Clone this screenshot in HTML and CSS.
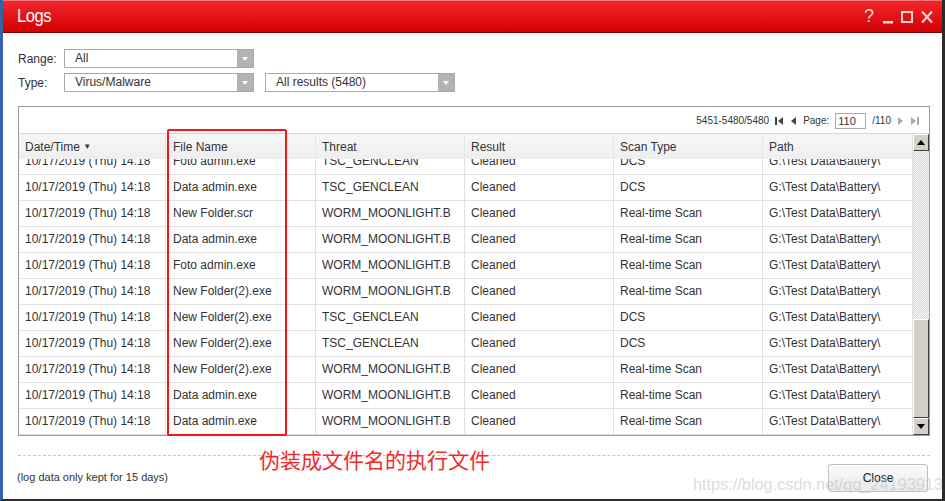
FILE: index.html
```html
<!DOCTYPE html>
<html lang="en">
<head>
    <meta charset="UTF-8">
    <title>Logs</title>
    <link rel="stylesheet" href="styles.css">
</head>
<body>
    <div class="window">
        <div class="titlebar">
            <span class="title">Logs</span>
            <div class="win-ctrls">
                <span class="wc-help">?</span>
                <svg class="wc" width="10" height="16" viewBox="0 0 10 16"><rect x="0" y="12" width="10" height="2.5" fill="#fbd6d6"/></svg>
                <svg class="wc" width="12" height="16" viewBox="0 0 12 16"><rect x="1" y="3" width="10" height="10" fill="none" stroke="#fbd6d6" stroke-width="2"/></svg>
                <svg class="wc" width="12" height="16" viewBox="0 0 12 16"><path d="M1 2.5 L11 13.5 M11 2.5 L1 13.5" stroke="#fbd6d6" stroke-width="2"/></svg>
            </div>
        </div>

        <div class="content">
            <div class="filters">
                <div class="filter-row">
                    <span class="label">Range:</span>
                    <div class="select">All<span class="arrow"></span></div>
                </div>
                <div class="filter-row">
                    <span class="label">Type:</span>
                    <div class="select">Virus/Malware<span class="arrow"></span></div>
                    <div class="select results">All results (5480)<span class="arrow"></span></div>
                </div>
            </div>

            <div class="grid">
                <div class="pager">
                    <span>5451-5480/5480</span>
                    <svg width="9" height="10" viewBox="0 0 9 10"><rect x="0" y="1" width="2" height="8" fill="#444"/><path d="M8 1 L3 5 L8 9 Z" fill="#444"/></svg>
                    <svg width="7" height="10" viewBox="0 0 7 10"><path d="M6 1 L1 5 L6 9 Z" fill="#444"/></svg>
                    <span>Page:</span>
                    <span class="page-box">110</span>
                    <span>/110</span>
                    <svg width="7" height="10" viewBox="0 0 7 10"><path d="M1 1 L6 5 L1 9 Z" fill="#aaa"/></svg>
                    <svg width="9" height="10" viewBox="0 0 9 10"><path d="M1 1 L6 5 L1 9 Z" fill="#aaa"/><rect x="7" y="1" width="2" height="8" fill="#aaa"/></svg>
                </div>
                <div class="grid-main">
                    <div class="grid-table">
                        <div class="row head">
                            <div class="cell">Date/Time <span class="sort">&#9660;</span></div>
                            <div class="cell">File Name</div>
                            <div class="cell">Threat</div>
                            <div class="cell">Result</div>
                            <div class="cell">Scan Type</div>
                            <div class="cell">Path</div>
                        </div>
                        <div class="grid-body">
                            <div class="rows">
                                <div class="row"><div class="cell">10/17/2019 (Thu) 14:18</div><div class="cell">Foto admin.exe</div><div class="cell">TSC_GENCLEAN</div><div class="cell">Cleaned</div><div class="cell">DCS</div><div class="cell">G:\Test Data\Battery\</div></div>
                                <div class="row"><div class="cell">10/17/2019 (Thu) 14:18</div><div class="cell">Data admin.exe</div><div class="cell">TSC_GENCLEAN</div><div class="cell">Cleaned</div><div class="cell">DCS</div><div class="cell">G:\Test Data\Battery\</div></div>
                                <div class="row"><div class="cell">10/17/2019 (Thu) 14:18</div><div class="cell">New Folder.scr</div><div class="cell">WORM_MOONLIGHT.B</div><div class="cell">Cleaned</div><div class="cell">Real-time Scan</div><div class="cell">G:\Test Data\Battery\</div></div>
                                <div class="row"><div class="cell">10/17/2019 (Thu) 14:18</div><div class="cell">Data admin.exe</div><div class="cell">WORM_MOONLIGHT.B</div><div class="cell">Cleaned</div><div class="cell">Real-time Scan</div><div class="cell">G:\Test Data\Battery\</div></div>
                                <div class="row"><div class="cell">10/17/2019 (Thu) 14:18</div><div class="cell">Foto admin.exe</div><div class="cell">WORM_MOONLIGHT.B</div><div class="cell">Cleaned</div><div class="cell">Real-time Scan</div><div class="cell">G:\Test Data\Battery\</div></div>
                                <div class="row"><div class="cell">10/17/2019 (Thu) 14:18</div><div class="cell">New Folder(2).exe</div><div class="cell">WORM_MOONLIGHT.B</div><div class="cell">Cleaned</div><div class="cell">Real-time Scan</div><div class="cell">G:\Test Data\Battery\</div></div>
                                <div class="row"><div class="cell">10/17/2019 (Thu) 14:18</div><div class="cell">New Folder(2).exe</div><div class="cell">TSC_GENCLEAN</div><div class="cell">Cleaned</div><div class="cell">DCS</div><div class="cell">G:\Test Data\Battery\</div></div>
                                <div class="row"><div class="cell">10/17/2019 (Thu) 14:18</div><div class="cell">New Folder(2).exe</div><div class="cell">TSC_GENCLEAN</div><div class="cell">Cleaned</div><div class="cell">DCS</div><div class="cell">G:\Test Data\Battery\</div></div>
                                <div class="row"><div class="cell">10/17/2019 (Thu) 14:18</div><div class="cell">New Folder(2).exe</div><div class="cell">WORM_MOONLIGHT.B</div><div class="cell">Cleaned</div><div class="cell">Real-time Scan</div><div class="cell">G:\Test Data\Battery\</div></div>
                                <div class="row"><div class="cell">10/17/2019 (Thu) 14:18</div><div class="cell">Data admin.exe</div><div class="cell">WORM_MOONLIGHT.B</div><div class="cell">Cleaned</div><div class="cell">Real-time Scan</div><div class="cell">G:\Test Data\Battery\</div></div>
                                <div class="row"><div class="cell">10/17/2019 (Thu) 14:18</div><div class="cell">Data admin.exe</div><div class="cell">WORM_MOONLIGHT.B</div><div class="cell">Cleaned</div><div class="cell">Real-time Scan</div><div class="cell">G:\Test Data\Battery\</div></div>
                            </div>
                        </div>
                    </div>
                    <div class="scrollbar">
                        <div class="sb-btn"><svg width="8" height="5" viewBox="0 0 8 5"><path d="M0 5 L4 0 L8 5 Z" fill="#000"/></svg></div>
                        <div class="sb-track"></div>
                        <div class="sb-thumb"></div>
                        <div class="sb-btn"><svg width="8" height="5" viewBox="0 0 8 5"><path d="M0 0 L8 0 L4 5 Z" fill="#000"/></svg></div>
                    </div>
                </div>
            </div>

            <div class="footer">
                <span class="note">(log data only kept for 15 days)</span>
                <div class="btn">Close</div>
            </div>
        </div>

        <div class="annot-box"></div>
        <div class="annot-text">伪装成文件名的执行文件</div>
        <div class="watermark">https://blog.csdn.net/qq_24193913</div>
    </div>
</body>
</html>
```

FILE: styles.css
```css
* {
    box-sizing: border-box;
}
body {
    margin: 0;
    background: #fff;
    font-family: "Liberation Sans", Arial, sans-serif;
    font-size: 12px;
    color: #333;
}
.window {
    position: relative;
    width: 945px;
    height: 501px;
    border-left: 3px solid #3563a6;
    border-right: 3px solid #2b2b2b;
    border-bottom: 2px solid #2b2b2b;
    background: #fff;
    overflow: hidden;
}
.titlebar {
    height: 33px;
    display: flex;
    align-items: center;
    justify-content: space-between;
    padding: 0 9px 0 14px;
    background: linear-gradient(#f3262e, #d30000);
    border-top: 1px solid #f77a7e;
    border-bottom: 1px solid #7a0000;
}
.title {
    color: #fff;
    font-size: 18px;
    letter-spacing: -0.5px;
    transform: scaleX(0.92);
    transform-origin: left center;
}
.win-ctrls {
    display: flex;
    align-items: center;
    gap: 8px;
}
.wc-help {
    color: #fbd6d6;
    font-size: 18px;
    margin-right: 1px;
}
.content {
    padding: 16px 12px 0 15px;
}
.filters {
    display: flex;
    flex-direction: column;
    gap: 5px;
}
.filter-row {
    display: flex;
    align-items: center;
}
.label {
    width: 46px;
    color: #333;
}
.select {
    position: relative;
    width: 190px;
    height: 19px;
    line-height: 17px;
    border: 1px solid #a9a9a9;
    padding-left: 10px;
    color: #333;
    background: #fff;
}
.select.results {
    margin-left: 11px;
}
.arrow {
    position: absolute;
    right: 0;
    top: 0;
    width: 16px;
    height: 17px;
    background: #b3b3b3;
}
.arrow::after {
    content: "";
    position: absolute;
    left: 5px;
    top: 7px;
    border-left: 3px solid transparent;
    border-right: 3px solid transparent;
    border-top: 4px solid #fff;
}
.grid {
    margin-top: 14px;
    width: 912px;
    border: 1px solid #9a9a9a;
}
.pager {
    height: 27px;
    display: flex;
    align-items: center;
    justify-content: flex-end;
    gap: 6px;
    padding-right: 10px;
    padding-top: 1px;
    font-size: 10px;
    color: #333;
    border-bottom: 1px solid #d6d6d6;
}
.pager svg {
    display: block;
}
.page-box {
    width: 31px;
    height: 16px;
    line-height: 14px;
    border: 1px solid #aaa;
    padding-left: 2px;
    font-size: 11px;
}
.grid-main {
    display: flex;
}
.grid-table {
    width: 893px;
}
.row {
    display: grid;
    grid-template-columns: 147px 150px 149px 149px 149px 149px;
    height: 26px;
    border-bottom: 1px solid #e2e2e2;
}
.cell {
    padding-left: 6px;
    line-height: 25px;
    white-space: nowrap;
    overflow: hidden;
    border-right: 1px solid #e2e2e2;
}
.cell:last-child {
    border-right: none;
}
.row .cell:nth-child(2) {
    padding-left: 7px;
}
.row.head {
    position: relative;
    z-index: 1;
    height: 25px;
    background: linear-gradient(#f7f7f7, #eeeeee);
    border-bottom: none;
}
.row.head .cell {
    line-height: 26px;
    border-right-color: #e6e6e6;
}
.sort {
    font-size: 8px;
    position: relative;
    top: -2px;
}
.grid-body {
    height: 276px;
    overflow: hidden;
}
.rows {
    margin-top: -10px;
}
.scrollbar {
    width: 17px;
    display: flex;
    flex-direction: column;
    border-left: 1px solid #e0e0e0;
}
.sb-btn {
    height: 17px;
    display: flex;
    align-items: center;
    justify-content: center;
    background: #d4d0c8;
    border: 1px solid;
    border-color: #fff #404040 #404040 #fff;
}
.sb-track {
    height: 168px;
    background-color: #f0f0f0;
    background-image: repeating-conic-gradient(#d4d0c8 0 25%, #fff 0 50%);
    background-size: 2px 2px;
}
.sb-thumb {
    flex: 1;
    background: #d4d0c8;
    border: 1px solid;
    border-color: #fff #404040 #404040 #fff;
}
.footer {
    margin-top: 19px;
    width: 912px;
    border-top: 1px dashed #c8c8c8;
    display: flex;
    justify-content: space-between;
    align-items: flex-start;
    padding-top: 8px;
}
.note {
    margin-left: -1px;
    margin-top: 7px;
    font-size: 11px;
    color: #333;
}
.btn {
    width: 100px;
    height: 28px;
    line-height: 26px;
    text-align: center;
    border: 1px solid #c0c0c0;
    border-radius: 3px;
    background: linear-gradient(#fbfbfb, #e9e9e9);
    color: #222;
    font-size: 12px;
    margin-right: 2px;
}
.annot-box {
    position: absolute;
    left: 164px;
    top: 129px;
    width: 120px;
    height: 307px;
    border: 2px solid #f21818;
    border-radius: 2px;
    z-index: 3;
}
.annot-text {
    position: absolute;
    left: 256px;
    top: 445px;
    font-family: "Noto Sans CJK SC", sans-serif;
    font-size: 21px;
    line-height: 28px;
    color: #f42a2a;
    z-index: 3;
}
.watermark {
    position: absolute;
    left: 690px;
    top: 475px;
    font-size: 16.3px;
    color: rgba(190, 190, 190, 0.55);
    z-index: 3;
    white-space: nowrap;
}
```
